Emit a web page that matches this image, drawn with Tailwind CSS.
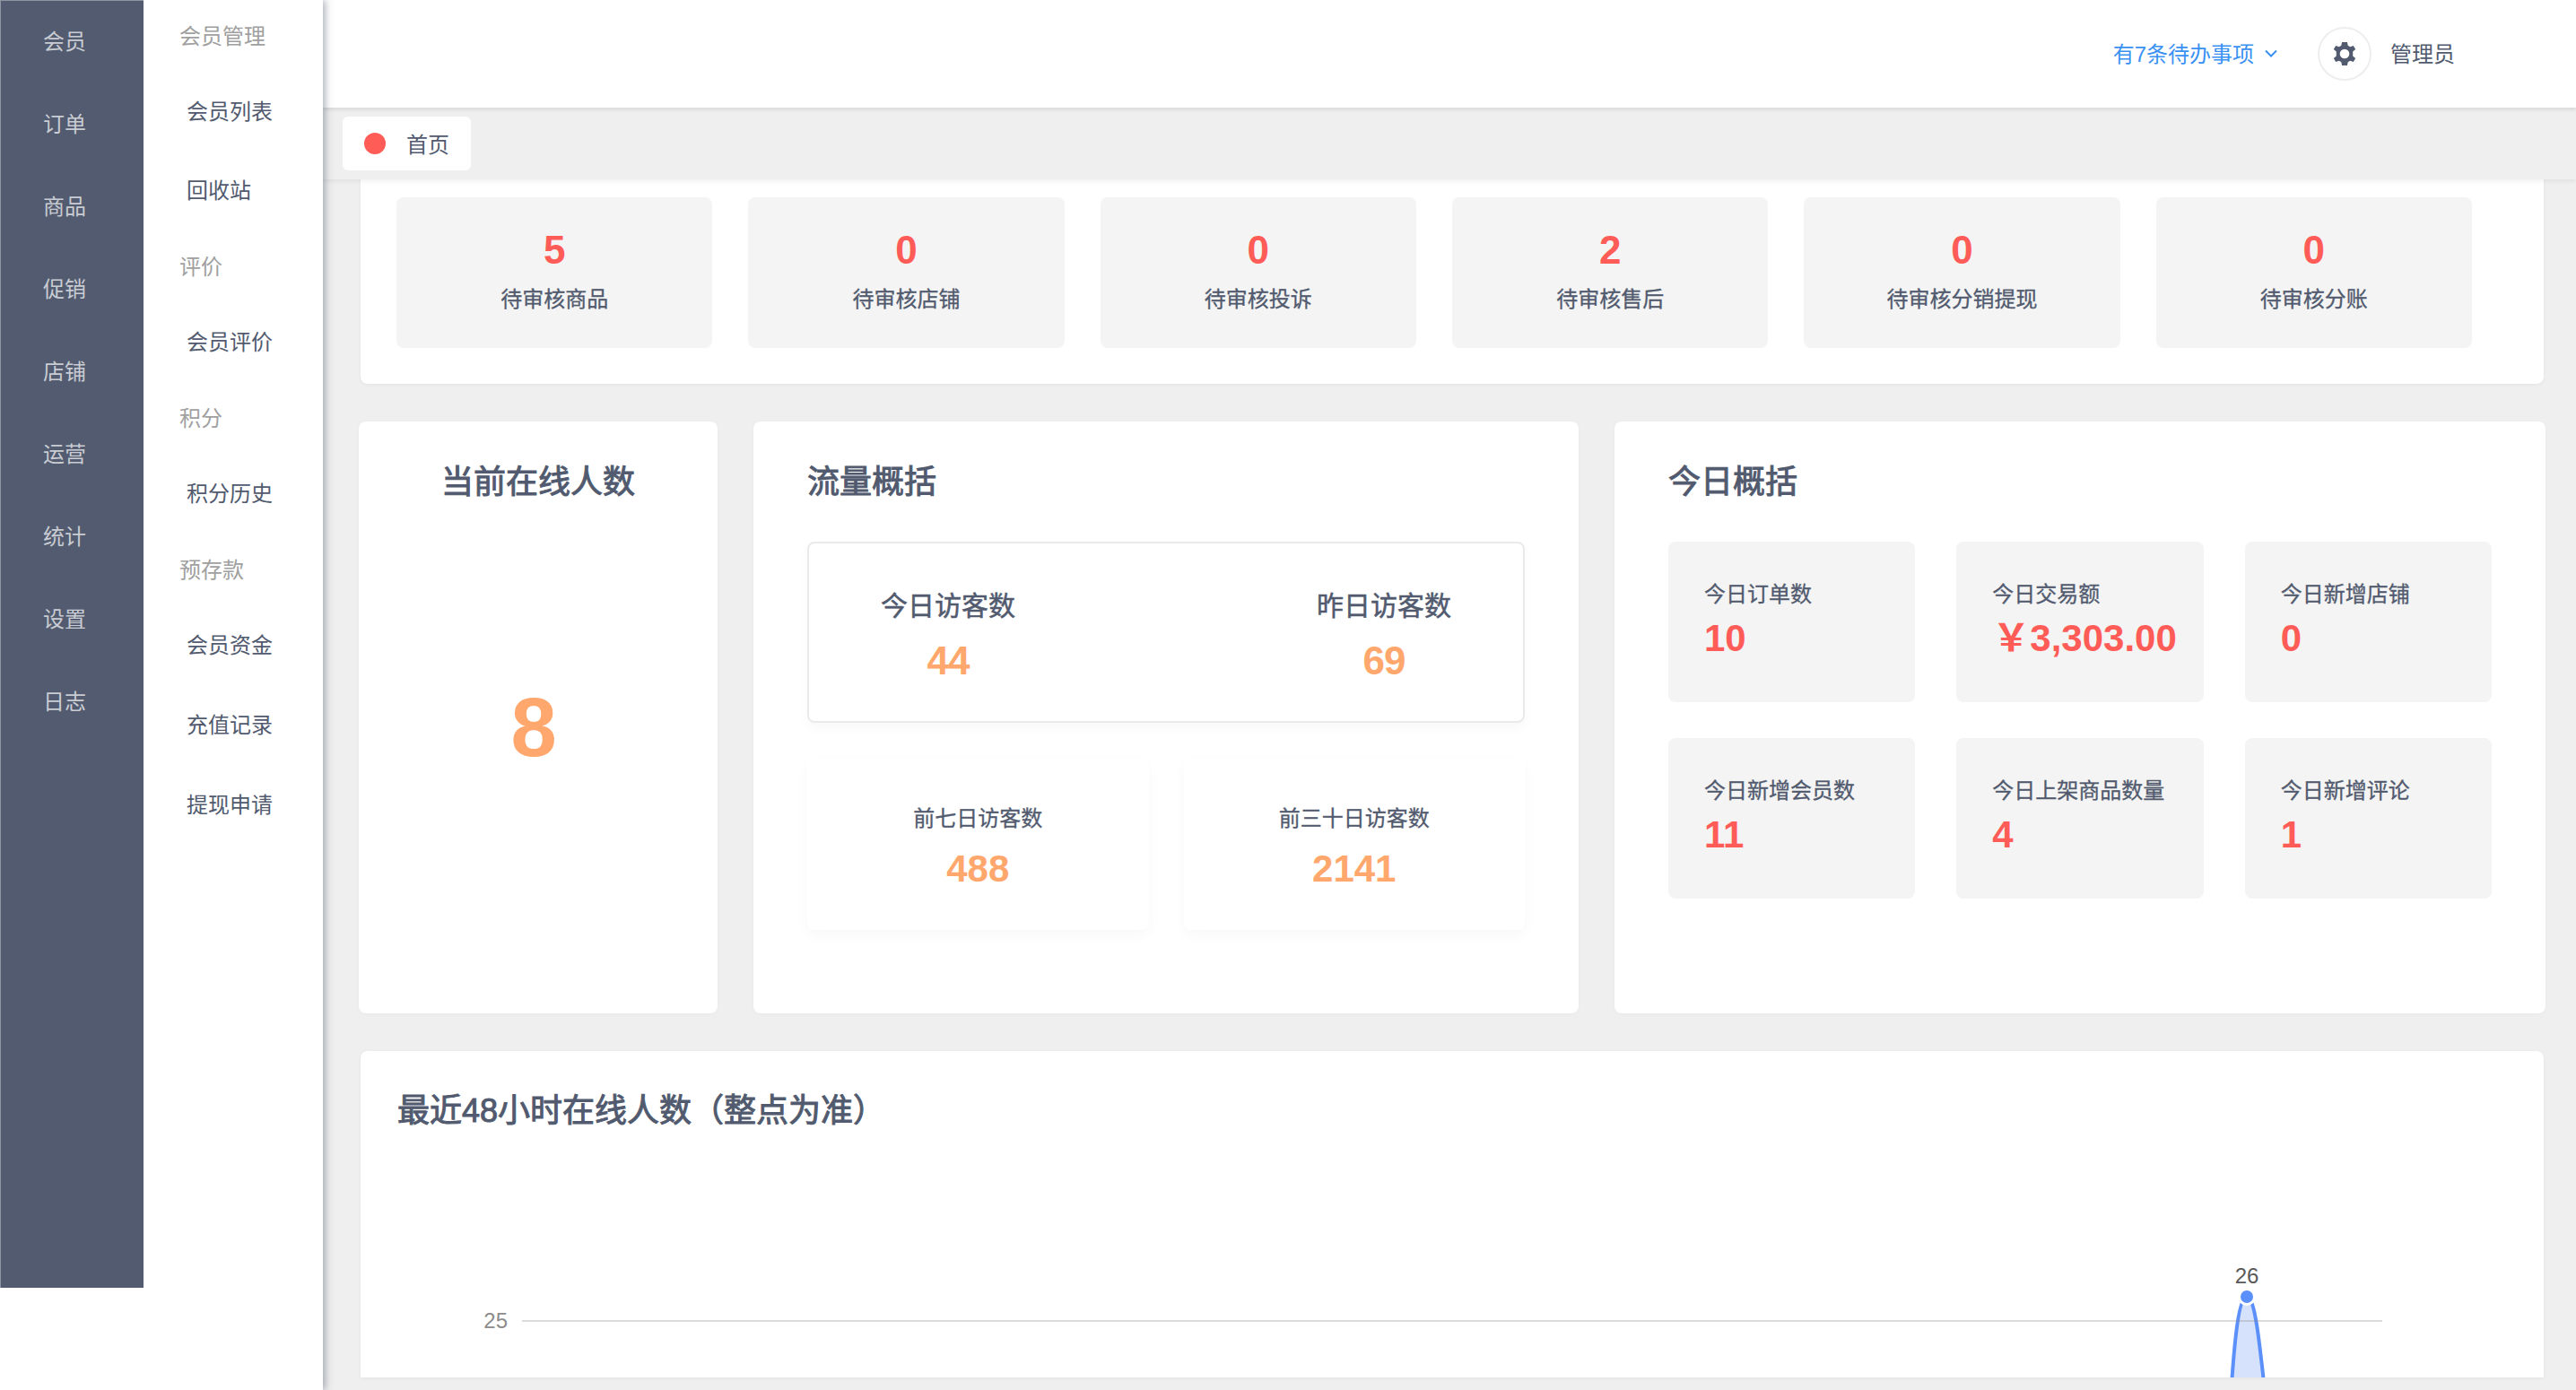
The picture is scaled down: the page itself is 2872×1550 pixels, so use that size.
<!DOCTYPE html>
<html lang="zh-CN">
<head>
    <meta charset="UTF-8">
    <title>首页</title>
    <script src="https://cdn.jsdelivr.net/npm/@tailwindcss/browser@4"></script>
</head>
<body class="w-[2872px] h-[1550px] overflow-hidden flex bg-[#efefef] text-[#515a6e] text-[24px] font-['Liberation_Sans','Noto_Sans_CJK_SC',sans-serif]">

    <!-- 左侧菜单 -->
    <aside class="w-[360px] h-[1550px] shrink-0 flex items-start bg-white relative z-20 shadow-[3px_0_8px_rgba(81,90,110,0.45)]">
        <nav class="w-[160px] h-[1436px] bg-[#525b6f] text-[#c9ccd3] pl-[47px] border-l border-t border-[#8f95a3]">
            <div class="h-[92px] flex items-center">会员</div>
            <div class="h-[92px] flex items-center">订单</div>
            <div class="h-[92px] flex items-center">商品</div>
            <div class="h-[92px] flex items-center">促销</div>
            <div class="h-[92px] flex items-center">店铺</div>
            <div class="h-[92px] flex items-center">运营</div>
            <div class="h-[92px] flex items-center">统计</div>
            <div class="h-[92px] flex items-center">设置</div>
            <div class="h-[92px] flex items-center">日志</div>
        </nav>
        <nav class="w-[200px] pl-[40px]">
            <div class="h-[81px] flex items-center text-[#a0a0a0]">会员管理</div>
            <div class="h-[88px] flex items-center pl-[8px]">会员列表</div>
            <div class="h-[88px] flex items-center pl-[8px]">回收站</div>
            <div class="h-[81px] flex items-center text-[#a0a0a0]">评价</div>
            <div class="h-[88px] flex items-center pl-[8px]">会员评价</div>
            <div class="h-[81px] flex items-center text-[#a0a0a0]">积分</div>
            <div class="h-[88px] flex items-center pl-[8px]">积分历史</div>
            <div class="h-[81px] flex items-center text-[#a0a0a0]">预存款</div>
            <div class="h-[88px] flex items-center pl-[8px]">会员资金</div>
            <div class="h-[89px] flex items-center pl-[8px]">充值记录</div>
            <div class="h-[89px] flex items-center pl-[8px]">提现申请</div>
        </nav>
    </aside>

    <main class="flex-1 h-[1550px] flex flex-col min-w-0">
        <!-- 顶栏 -->
        <header class="h-[120px] shrink-0 bg-white flex items-center justify-end pr-[135px] relative z-[11] shadow-[0_3px_3px_rgba(0,0,0,0.08)]">
            <span class="text-[#3a91f2] pt-[2px]">有7条待办事项</span>
            <svg class="w-[16px] h-[10px] ml-[11px] text-[#3a91f2]" viewBox="0 0 16 10" fill="none" stroke="currentColor" stroke-width="2"><path d="M2 1.5 8 7.5 14 1.5"/></svg>
            <div class="w-[60px] h-[60px] ml-[44px] rounded-full border-2 border-[#eeeeee] flex items-center justify-center">
                <svg class="w-[32px] h-[32px]" viewBox="0 0 24 24" fill="currentColor"><path d="M12 2.2 14.2 2.2 14.8 5.1 16.6 6.1 19.4 5.2 21.1 8.2 18.9 10.1V13.9L21.1 15.8 19.4 18.8 16.6 17.9 14.8 18.9 14.2 21.8H9.8L9.2 18.9 7.4 17.9 4.6 18.8 2.9 15.8 5.1 13.9V10.1L2.9 8.2 4.6 5.2 7.4 6.1 9.2 5.1 9.8 2.2ZM12 8A4 4 0 1 0 12 16 4 4 0 1 0 12 8Z" fill-rule="evenodd"/></svg>
            </div>
            <span class="ml-[21px] pt-[2px]">管理员</span>
        </header>

        <!-- 标签栏 -->
        <div class="h-[80px] shrink-0 pl-[22px] pt-[10px] bg-[#efefef] relative z-10 shadow-[0_3px_4px_rgba(0,0,0,0.05)]">
            <div class="w-[143px] h-[60px] bg-white rounded-[6px] flex items-center pl-[24px] gap-[23px]">
                <span class="w-[24px] h-[24px] rounded-full bg-[#ff5c58]"></span>
                <span class="pt-[3px]">首页</span>
            </div>
        </div>

        <div class="flex-1 min-h-0 overflow-hidden pl-[40px] pr-[34px]">
            <!-- 待审核 -->
            <section class="h-[228px] ml-[2px] mr-[2px] bg-white rounded-b-[8px] pt-[20px] pl-[40px] pr-[80px] flex gap-[40px] shadow-[0_1px_4px_rgba(0,0,0,0.05)]">
                <div class="flex-1 h-[168px] bg-[#f4f4f4] rounded-[8px] text-center pt-[34px]">
                    <div class="text-[44px] leading-[50px] font-bold text-[#ff5c58]">5</div>
                    <div class="leading-[34px] mt-[13px] [-webkit-text-stroke:0.3px_currentColor]">待审核商品</div>
                </div>
                <div class="flex-1 h-[168px] bg-[#f4f4f4] rounded-[8px] text-center pt-[34px]">
                    <div class="text-[44px] leading-[50px] font-bold text-[#ff5c58]">0</div>
                    <div class="leading-[34px] mt-[13px] [-webkit-text-stroke:0.3px_currentColor]">待审核店铺</div>
                </div>
                <div class="flex-1 h-[168px] bg-[#f4f4f4] rounded-[8px] text-center pt-[34px]">
                    <div class="text-[44px] leading-[50px] font-bold text-[#ff5c58]">0</div>
                    <div class="leading-[34px] mt-[13px] [-webkit-text-stroke:0.3px_currentColor]">待审核投诉</div>
                </div>
                <div class="flex-1 h-[168px] bg-[#f4f4f4] rounded-[8px] text-center pt-[34px]">
                    <div class="text-[44px] leading-[50px] font-bold text-[#ff5c58]">2</div>
                    <div class="leading-[34px] mt-[13px] [-webkit-text-stroke:0.3px_currentColor]">待审核售后</div>
                </div>
                <div class="flex-1 h-[168px] bg-[#f4f4f4] rounded-[8px] text-center pt-[34px]">
                    <div class="text-[44px] leading-[50px] font-bold text-[#ff5c58]">0</div>
                    <div class="leading-[34px] mt-[13px] [-webkit-text-stroke:0.3px_currentColor]">待审核分销提现</div>
                </div>
                <div class="flex-1 h-[168px] bg-[#f4f4f4] rounded-[8px] text-center pt-[34px]">
                    <div class="text-[44px] leading-[50px] font-bold text-[#ff5c58]">0</div>
                    <div class="leading-[34px] mt-[13px] [-webkit-text-stroke:0.3px_currentColor]">待审核分账</div>
                </div>
            </section>

            <div class="flex gap-[40px] mt-[42px] h-[660px]">
                <!-- 在线人数 -->
                <section class="w-[400px] bg-white rounded-[8px] pt-[48px] text-center shadow-[0_1px_4px_rgba(0,0,0,0.03)]">
                    <h2 class="text-[36px] leading-[40px] [-webkit-text-stroke:1px_currentColor]">当前在线人数</h2>
                    <div class="mt-[203px] pr-[10px] text-[92px] leading-[100px] font-bold text-[#ffa76c]">8</div>
                </section>

                <!-- 流量概括 -->
                <section class="w-[920px] bg-white rounded-[8px] pt-[48px] px-[60px] shadow-[0_1px_4px_rgba(0,0,0,0.03)]">
                    <h2 class="text-[36px] leading-[40px] [-webkit-text-stroke:1px_currentColor]">流量概括</h2>
                    <div class="mt-[46px] h-[202px] border-2 border-[#e8eaec] rounded-[8px] px-[80px] pt-[50px] flex justify-between text-center shadow-[0_6px_14px_rgba(0,0,0,0.03)]">
                        <div>
                            <div class="text-[30px] leading-[40px] [-webkit-text-stroke:0.5px_currentColor]">今日访客数</div>
                            <div class="text-[44px] leading-[50px] mt-[16px] font-bold text-[#ffa76c] tracking-[-1px]">44</div>
                        </div>
                        <div>
                            <div class="text-[30px] leading-[40px] [-webkit-text-stroke:0.5px_currentColor]">昨日访客数</div>
                            <div class="text-[44px] leading-[50px] mt-[16px] font-bold text-[#ffa76c] tracking-[-1px]">69</div>
                        </div>
                    </div>
                    <div class="mt-[40px] grid grid-cols-2 gap-[39px]">
                        <div class="h-[191px] rounded-[8px] text-center pt-[53px] shadow-[0_6px_16px_rgba(0,0,0,0.03)]">
                            <div class="leading-[28px] [-webkit-text-stroke:0.3px_currentColor]">前七日访客数</div>
                            <div class="text-[42px] leading-[50px] mt-[17px] font-bold text-[#ffa76c]">488</div>
                        </div>
                        <div class="h-[191px] rounded-[8px] text-center pt-[53px] shadow-[0_6px_16px_rgba(0,0,0,0.03)]">
                            <div class="leading-[28px] [-webkit-text-stroke:0.3px_currentColor]">前三十日访客数</div>
                            <div class="text-[42px] leading-[50px] mt-[17px] font-bold text-[#ffa76c]">2141</div>
                        </div>
                    </div>
                </section>

                <!-- 今日概括 -->
                <section class="w-[1038px] bg-white rounded-[8px] pt-[48px] pl-[60px] pr-[60px] shadow-[0_1px_4px_rgba(0,0,0,0.03)]">
                    <h2 class="text-[36px] leading-[40px] [-webkit-text-stroke:1px_currentColor]">今日概括</h2>
                    <div class="mt-[46px] grid grid-cols-3 gap-x-[46px] gap-y-[40px]">
                        <div class="h-[179px] bg-[#f4f4f4] rounded-[8px] pl-[40px] pt-[42px]">
                            <div class="leading-[34px] [-webkit-text-stroke:0.3px_currentColor]">今日订单数</div>
                            <div class="text-[42px] leading-[50px] mt-[7px] font-bold text-[#ff5c58]">10</div>
                        </div>
                        <div class="h-[179px] bg-[#f4f4f4] rounded-[8px] pl-[40px] pt-[42px]">
                            <div class="leading-[34px] [-webkit-text-stroke:0.3px_currentColor]">今日交易额</div>
                            <div class="text-[42px] leading-[50px] mt-[7px] font-bold text-[#ff5c58]">￥3,303.00</div>
                        </div>
                        <div class="h-[179px] bg-[#f4f4f4] rounded-[8px] pl-[40px] pt-[42px]">
                            <div class="leading-[34px] [-webkit-text-stroke:0.3px_currentColor]">今日新增店铺</div>
                            <div class="text-[42px] leading-[50px] mt-[7px] font-bold text-[#ff5c58]">0</div>
                        </div>
                        <div class="h-[179px] bg-[#f4f4f4] rounded-[8px] pl-[40px] pt-[42px]">
                            <div class="leading-[34px] [-webkit-text-stroke:0.3px_currentColor]">今日新增会员数</div>
                            <div class="text-[42px] leading-[50px] mt-[7px] font-bold text-[#ff5c58]">11</div>
                        </div>
                        <div class="h-[179px] bg-[#f4f4f4] rounded-[8px] pl-[40px] pt-[42px]">
                            <div class="leading-[34px] [-webkit-text-stroke:0.3px_currentColor]">今日上架商品数量</div>
                            <div class="text-[42px] leading-[50px] mt-[7px] font-bold text-[#ff5c58]">4</div>
                        </div>
                        <div class="h-[179px] bg-[#f4f4f4] rounded-[8px] pl-[40px] pt-[42px]">
                            <div class="leading-[34px] [-webkit-text-stroke:0.3px_currentColor]">今日新增评论</div>
                            <div class="text-[42px] leading-[50px] mt-[7px] font-bold text-[#ff5c58]">1</div>
                        </div>
                    </div>
                </section>
            </div>

            <!-- 48小时图表 -->
            <section class="h-[364px] ml-[2px] mr-[2px] mt-[42px] bg-white rounded-t-[8px] overflow-hidden pt-[47px] shadow-[0_1px_4px_rgba(0,0,0,0.05)]">
                <h2 class="pl-[41px] text-[36px] leading-[40px] [-webkit-text-stroke:1px_currentColor]">最近48小时在线人数（整点为准）</h2>
                <svg class="block w-[2434px] h-[277px]" viewBox="402 1259 2434 277">
                    <path d="M2487 1560C2491 1495 2496 1446 2505 1446C2514 1446 2519 1495 2526 1560Z" fill="#d6e2fb"/>
                    <path d="M2487 1560C2491 1495 2496 1446 2505 1446C2514 1446 2519 1495 2526 1560" fill="none" stroke="#5b8ff9" stroke-width="4"/>
                    <line x1="582" y1="1473" x2="2656" y2="1473" stroke="#888888" stroke-opacity="0.3" stroke-width="2"/>
                    <circle cx="2505" cy="1446" r="10" fill="#ffffff"/>
                    <circle cx="2505" cy="1446" r="7" fill="#5b8ff9"/>
                    <text x="566" y="1481" text-anchor="end" font-size="24" fill="#8c8c8c">25</text>
                    <text x="2505" y="1431" text-anchor="middle" font-size="24" fill="#595959">26</text>
                </svg>
            </section>
        </div>
    </main>
</body>
</html>
